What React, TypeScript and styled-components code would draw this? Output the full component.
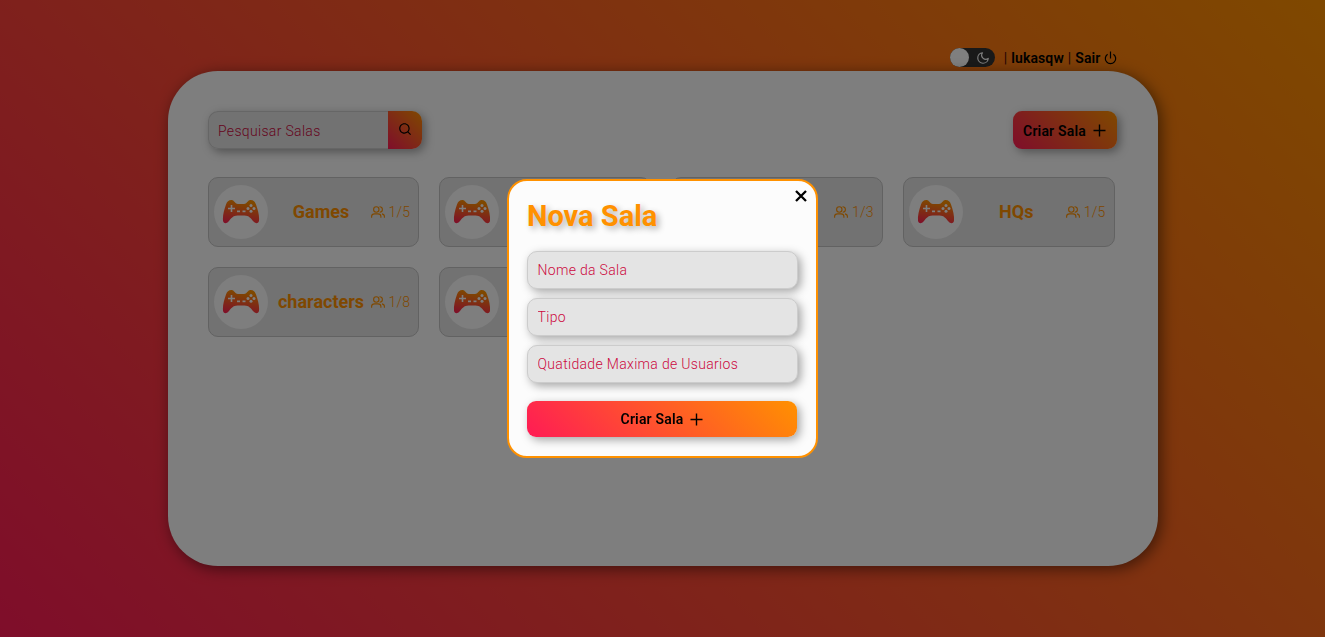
import React from "react";
import styled, { createGlobalStyle } from "styled-components";
import { RiSearchLine } from "react-icons/ri";
import { FiMoon } from "react-icons/fi";

const gradient = "linear-gradient(45deg, #ff1b55, #ff9100)";
const softShadow = "3px 3px 10px rgba(0, 0, 0, 0.35)";

const GlobalStyle = createGlobalStyle`
  * { box-sizing: border-box; margin: 0; padding: 0; }
  body { font-family: Roboto, sans-serif; overflow: hidden; }
  button, input { font-family: inherit; }
`;

const Page = styled.div`
  height: 100vh;
  display: flex;
  flex-direction: column;
  align-items: center;
  background: ${gradient};
`;

const TopBar = styled.header`
  width: 990px;
  height: 71.4px;
  padding: 0 41px 4px 0;
  display: flex;
  align-items: flex-end;
  justify-content: flex-end;
`;

const Toggle = styled.div`
  width: 45px;
  height: 19px;
  margin-right: 9px;
  padding-right: 5px;
  border-radius: 10px;
  background: #333;
  color: #fff;
  display: flex;
  align-items: center;
  justify-content: space-between;
`;

const Knob = styled.span`
  width: 19px;
  height: 19px;
  border-radius: 50%;
  background: #fff;
`;

const UserNav = styled.nav`
  height: 19px;
  display: flex;
  align-items: center;
  gap: 4px;
  font-size: 14px;
  font-weight: 600;
  letter-spacing: 0.1px;
  svg { margin-left: -1px; }
`;

const Bar = styled.span`
  color: #4a0508;
  font-weight: 400;
`;

const Panel = styled.main`
  width: 990px;
  height: 495px;
  padding: 40px;
  border-radius: 50px;
  background: #fcfcfc;
  box-shadow: 3px 3px 15px rgba(0, 0, 0, 0.5);
`;

const Actions = styled.div`
  width: 909px;
  display: flex;
  justify-content: space-between;
  margin-bottom: 28px;
`;

const SearchBox = styled.div`
  display: flex;
  width: 214px;
  height: 38px;
  border-radius: 10px;
  box-shadow: ${softShadow};
`;

const Input = styled.input<{ $joined?: boolean }>`
  width: 100%;
  min-width: 0;
  height: 38px;
  padding: ${(p) => (p.$joined ? "1px 0 0 9.5px" : "0 9.5px")};
  border: 2px solid #ccc;
  border-width: ${(p) => (p.$joined ? "1px 0 1px 1px" : "1.6px")};
  border-radius: ${(p) => (p.$joined ? "10px 0 0 10px" : "10px")};
  background: #e4e4e4;
  box-shadow: ${(p) => (p.$joined ? "none" : softShadow)};
  font-size: 14px;
  font-weight: 300;
  letter-spacing: 0.32px;
  outline: none;
  &::placeholder { color: #cc0a40; opacity: 1; }
`;

const SearchButton = styled.button`
  flex: 0 0 34px;
  padding-bottom: 3px;
  border: 0;
  border-radius: 0 10px 10px 0;
  background: ${gradient};
  font-size: 14px;
  display: flex;
  align-items: center;
  justify-content: center;
`;

const CreateButton = styled.button<{ $wide?: boolean }>`
  width: ${(p) => (p.$wide ? "270px" : "104px")};
  height: ${(p) => (p.$wide ? "36px" : "38px")};
  padding-top: ${(p) => (p.$wide ? "0" : "1px")};
  border: 0;
  border-radius: 9px;
  background: ${gradient};
  box-shadow: ${softShadow};
  color: #000;
  font-size: 14px;
  font-weight: 600;
  letter-spacing: 0.18px;
  display: flex;
  align-items: center;
  justify-content: center;
  gap: 7px;
`;

const Rooms = styled.section`
  width: 907px;
  display: grid;
  grid-template-columns: repeat(4, 1fr);
  gap: 20px;
`;

const Room = styled.article`
  height: 70px;
  padding: 0 8px 0 5px;
  border: 1px solid #c4c4c4;
  border-radius: 10px;
  background: #e4e4e4;
  color: #ff9100;
  display: flex;
  align-items: center;
`;

const Avatar = styled.div`
  flex: 0 0 54px;
  height: 54px;
  border-radius: 50%;
  background: #fcfcfc;
  display: flex;
  align-items: center;
  justify-content: center;
`;

const RoomName = styled.h2`
  flex: 1;
  padding: 0 0 2px 4px;
  text-align: center;
  font-size: 18px;
  font-weight: 700;
`;

const Count = styled.span`
  display: flex;
  align-items: center;
  gap: 4px;
  font-size: 14px;
  font-weight: 350;
  letter-spacing: 0.2px;
`;

const Overlay = styled.div`
  position: fixed;
  inset: 0;
  background: rgba(0, 0, 0, 0.5);
  display: flex;
  align-items: center;
  justify-content: center;
`;

const Dialog = styled.form`
  position: relative;
  width: 311px;
  height: 279px;
  padding: 18px;
  border: 2px solid #ff9100;
  border-radius: 20px;
  background: #fcfcfc;
  display: flex;
  flex-direction: column;
  gap: 9px;
`;

const Title = styled.h1`
  height: 43px;
  color: #ff9100;
  font-size: 29px;
  line-height: 34px;
  font-weight: 700;
  text-shadow: 3px 3px 6px rgba(0, 0, 0, 0.3);
`;

const Submit = styled.div`
  margin-top: 9px;
`;

const Close = styled.button`
  position: absolute;
  top: 8px;
  right: 8px;
  width: 14px;
  height: 14px;
  border: 0;
  background: none;
  display: flex;
`;

const Plus = () => (
  <svg width="13" height="13" viewBox="0 0 13 13">
    <path d="M6.500 .5v12M.5 6.500h12" stroke="currentColor" strokeWidth="1.400" />
  </svg>
);

const Power = () => (
  <svg width="13" height="14" viewBox="0 0 13 14" fill="none" stroke="currentColor" strokeWidth="1.200">
    <path d="M6.500 .5V7.500M3.600 3.200A5.200 5.200 0 1 0 9.400 3.200" />
  </svg>
);

const People = () => (
  <svg width="14" height="12" viewBox="0 0 14 12" fill="none" stroke="currentColor" strokeWidth="1.100">
    <circle cx="5.300" cy="3.500" r="2.700" />
    <path d="M.6 11.800V10.500C.6 8.800 2 7.900 3.600 7.900H7C8.600 7.900 9.900 8.800 9.900 10.500V11.800" />
    <path d="M8.500 .8C10.300 .7 11.400 1.900 11.400 3.400S10.300 6.100 8.700 6.200M11 7.900C12.600 8.200 13.400 9.200 13.400 10.600V11.800" />
  </svg>
);

const Gamepad = () => (
  <svg width="38" height="26" viewBox="0 0 38 26">
    <defs>
      <linearGradient id="pad" x1="0" y1="1" x2="0.25" y2="0">
        <stop offset="0" stopColor="#ff1b55" />
        <stop offset="1" stopColor="#ff9100" />
      </linearGradient>
    </defs>
    <path
      fill="url(#pad)"
      d="M9.500 1C12 .7 12.500 4.500 16 5H22C25.500 4.500 26 .7 28.500 1C31.500 1 33 2.500 34 5.500C36 11 37.500 17 37 21.500C36.700 24.800 33.500 25 31.500 22.500C29 19.500 27 16.500 22.500 16.500H15.500C11 16.500 9 19.500 6.500 22.500C4.500 25 1.300 24.800 1 21.500C.5 17 2 11 4 5.500C5 2.500 6.500 1 9.500 1Z"
    />
    <path d="M9.500 6v7M6 9.500h7" stroke="#fcfcfc" strokeWidth="1.600" />
    <g fill="#fcfcfc">
      <circle cx="29" cy="6.600" r="1.500" />
      <circle cx="29" cy="12.200" r="1.500" />
      <circle cx="26" cy="9.400" r="1.500" />
      <circle cx="32" cy="9.400" r="1.500" />
      <rect x="15" y="11.500" width="3" height="1.700" />
      <rect x="20.500" y="11.500" width="3" height="1.700" />
    </g>
  </svg>
);

const rooms = [
  { name: "Games", count: "1/5" },
  { name: "", count: "" },
  { name: "", count: "1/3" },
  { name: "HQs", count: "1/5" },
  { name: "characters", count: "1/8" },
  { name: "", count: "" },
];

export default function App() {
  return (
    <>
      <GlobalStyle />
      <Page>
        <TopBar>
          <Toggle>
            <Knob />
            <FiMoon size={14} />
          </Toggle>
          <UserNav>
            <Bar>|</Bar>
            <span>lukasqw</span>
            <Bar>|</Bar>
            <span>Sair</span>
            <Power />
          </UserNav>
        </TopBar>
        <Panel>
          <Actions>
            <SearchBox>
              <Input $joined placeholder="Pesquisar Salas" />
              <SearchButton type="button" aria-label="Pesquisar">
                <RiSearchLine />
              </SearchButton>
            </SearchBox>
            <CreateButton type="button">
              Criar Sala <Plus />
            </CreateButton>
          </Actions>
          <Rooms>
            {rooms.map((room, i) => (
              <Room key={i}>
                <Avatar>
                  <Gamepad />
                </Avatar>
                <RoomName>{room.name}</RoomName>
                {room.count && (
                  <Count>
                    <People />
                    {room.count}
                  </Count>
                )}
              </Room>
            ))}
          </Rooms>
        </Panel>
      </Page>
      <Overlay>
        <Dialog>
          <Close type="button" aria-label="Fechar">
            <svg width="14" height="14" viewBox="0 0 14 14">
              <path d="M2 2l10 10M12 2L2 12" stroke="#000" strokeWidth="2.300" />
            </svg>
          </Close>
          <Title>Nova Sala</Title>
          <Input placeholder="Nome da Sala" />
          <Input placeholder="Tipo" />
          <Input placeholder="Quatidade Maxima de Usuarios" />
          <Submit>
            <CreateButton $wide type="button">
              Criar Sala <Plus />
            </CreateButton>
          </Submit>
        </Dialog>
      </Overlay>
    </>
  );
}
